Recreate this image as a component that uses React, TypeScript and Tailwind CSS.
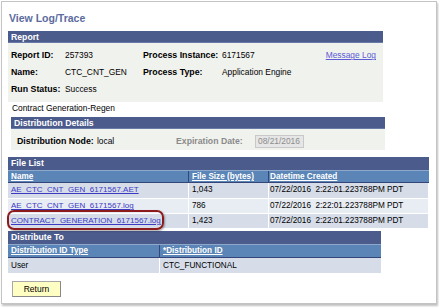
import React from "react";

const hdr = "h-[12px] bg-[#4b5b8c] text-white font-bold text-[8.7px] leading-[12px] pl-[3px] border-b border-[#6a7aa8]";

function Row({ label, value, extraLabel, extraValue, link }: { label: string; value: string; extraLabel?: string; extraValue?: string; link?: string }) {
  return (
    <div className="grid grid-cols-[54px_78px_79px_1fr] h-[17px] items-center">
      <div className="font-bold text-[8.8px]">{label}</div>
      <div className="text-[8.4px]">{value}</div>
      <div className="font-bold text-[8.8px]">{extraLabel}</div>
      <div className="flex justify-between pr-[7px] text-[8.4px]">
        <span>{extraValue}</span>
        {link && <span className="text-[#5b5bd6] underline">{link}</span>}
      </div>
    </div>
  );
}

export default function App() {
  const files = [
    { n: "AE_CTC_CNT_GEN_6171567.AET", s: "1,043", bg: "bg-[#d6dde9]" },
    { n: "AE_CTC_CNT_GEN_6171567.log", s: "786", bg: "bg-[#e8ecf3]" },
    { n: "CONTRACT_GENERATION_6171567.log", s: "1,423", bg: "bg-[#d6dde9]" },
  ];
  return (
    <div className="w-[439px] h-[307px] bg-white overflow-hidden font-['Liberation_Sans',Arial,sans-serif] text-black">
      <div className="ml-[1px] mt-[1px] w-[436px] h-[303px] border border-[#c4c4c4] shadow-[1px_2px_2px_rgba(0,0,0,0.25)] flex flex-col">
        <div className="mt-[8px] ml-[7px] h-[16px] leading-[16px] text-[10.5px] font-bold text-[#5b6b9e]">View Log/Trace</div>

        {/* Report */}
        <div className="mt-[5px] ml-[6px] w-[375px]">
          <div className={hdr}>Report</div>
          <div className="h-[59px] bg-[#f0f2ee] pl-[3px] pt-[4px]">
            <Row label="Report ID:" value="257393" extraLabel="Process Instance:" extraValue="6171567" link="Message Log" />
            <Row label="Name:" value="CTC_CNT_GEN" extraLabel="Process Type:" extraValue="Application Engine" />
            <Row label="Run Status:" value="Success" />
          </div>
        </div>
        <div className="ml-[10px] h-[13px] leading-[13px] text-[8.4px]">Contract Generation-Regen</div>

        {/* Distribution Details */}
        <div className="mt-[2px] ml-[9px] w-[374px]">
          <div className={hdr}>Distribution Details</div>
          <div className="h-[21px] bg-[#f0f2ee] pl-[6px] pt-[6px] flex items-start">
            <div className="h-[13px] flex items-center">
              <span className="font-bold text-[8.8px] w-[80px]">Distribution Node:</span>
              <span className="text-[8.4px] w-[79px]">local</span>
              <span className="font-bold text-[8.7px] text-[#8a8a8a] w-[79px]">Expiration Date:</span>
              <span className="w-[49px] h-[13px] bg-[#e6e6e6] border border-[#c8c8c8] text-[#8c8c8c] text-[8.4px] leading-[11px] pl-[2px]">08/21/2016</span>
            </div>
          </div>
        </div>

        {/* File List */}
        <div className="mt-[7px] ml-[6px] w-[421px] relative">
          <div className="h-[13px] bg-[#4b5b8c] text-white font-bold text-[8.7px] leading-[13px] pl-[3px]">File List</div>
          <div className="grid grid-cols-[180px_80px_1fr] h-[13px] bg-[#5a85b6] border-t border-[#8ea8cc] border-b border-b-[#34457a] text-white font-bold underline text-[8.2px] leading-[11px]">
            <div className="pl-[3px]">Name</div>
            <div className="pl-[3px] border-l border-[#34457a]">File Size (bytes)</div>
            <div className="pl-[1px] border-l border-[#34457a]">Datetime Created</div>
          </div>
          {files.map((f, i) => (
            <div key={i} className={`grid grid-cols-[180px_80px_1fr] h-[15px] mr-[1px] text-[8.2px] leading-[14px] ${f.bg} ${i > 0 ? "border-t border-white" : ""}`}>
              <div className="pl-[3px] text-[8px] text-[#3a3ac4] underline">{f.n}</div>
              <div className="pl-[3px] border-l border-white">{f.s}</div>
              <div className="pl-[1px] border-l border-white">07/22/2016&nbsp;&nbsp;2:22:01.223788PM PDT</div>
            </div>
          ))}
          <div className="absolute left-[-1px] top-[53px] w-[157px] h-[20px] border-[2.5px] border-[#8e1b1b] rounded-[7px] shadow-[1px_1px_2px_rgba(0,0,0,0.35)]" />
        </div>

        {/* Distribute To */}
        <div className="mt-[3px] ml-[6px] w-[373px]">
          <div className="h-[13px] bg-[#4b5b8c] text-white font-bold text-[8.7px] leading-[13px] pl-[3px]">Distribute To</div>
          <div className="grid grid-cols-[151px_1fr] h-[14px] bg-[#5a85b6] border-t border-[#8ea8cc] border-b border-b-[#34457a] text-white font-bold underline text-[8.2px] leading-[12px]">
            <div className="pl-[3px]">Distribution ID Type</div>
            <div className="pl-[3px] border-l border-[#34457a]">*Distribution ID</div>
          </div>
          <div className="grid grid-cols-[151px_1fr] h-[15px] bg-[#d6dde9] text-[8.2px] leading-[15px]">
            <div className="pl-[3px]">User</div>
            <div className="pl-[3px] border-l border-white">CTC_FUNCTIONAL</div>
          </div>
        </div>

        <div className="mt-[8px] ml-[10px] w-[49px] h-[16px] bg-[#ffffc4] border border-[#a8a8a8] border-r-[#888] border-b-[#888] text-[8.5px] leading-[14px] text-center">Return</div>
      </div>
    </div>
  );
}
